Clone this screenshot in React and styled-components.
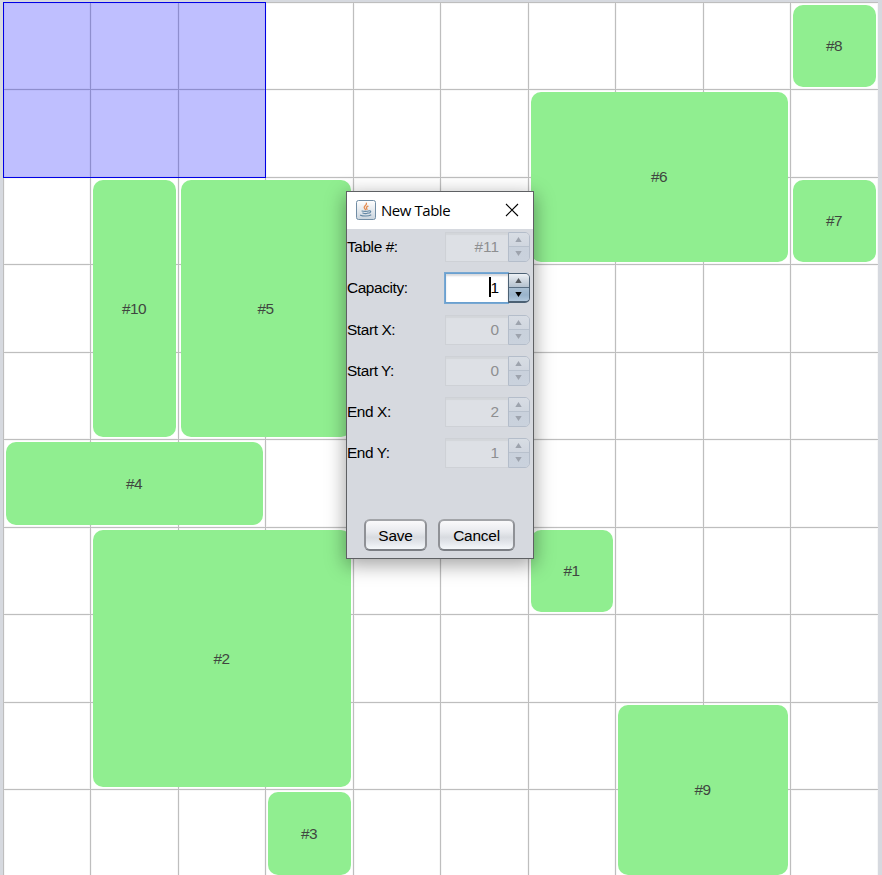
import React from "react";
import styled, { createGlobalStyle, css } from "styled-components";

const GlobalStyle = createGlobalStyle`
  * { box-sizing: border-box; }
  html, body { margin: 0; height: 100%; overflow: hidden; background: #d6d9df; }
  body { font-family: "Liberation Sans", Arial, sans-serif; font-size: 15px; }
`;

const Page = styled.main`
  height: 875px;
  width: 882px;
  padding: 2px 4px 0 3px;
  overflow: hidden;
  position: relative;
`;

const FloorPlan = styled.div`
  display: grid;
  grid-template-columns: repeat(5, 87px 88px);
  grid-template-rows: repeat(5, 87px 88px);
  background: #fff;
`;

const Cell = styled.div`
  grid-area: ${(p) => `${p.$row + 1} / ${p.$col + 1}`};
  border-left: 1px solid #bebebe;
  border-top: 1px solid #bebebe;
  box-shadow: inset 0 0 0 1px #f7f7f7;
`;

const span = css`
  grid-column: ${(p) => `${p.$x0 + 1} / ${p.$x1 + 2}`};
  grid-row: ${(p) => `${p.$y0 + 1} / ${p.$y1 + 2}`};
`;

const Table = styled.div`
  ${span}
  margin: 3px 2px 2px 3px;
  border-radius: 10px;
  background: #90ee90;
  color: #404640;
  display: flex;
  align-items: center;
  justify-content: center;
  padding: 0 1px 0 0;
  font-size: 15.4px;
  letter-spacing: -0.6px;
`;

const Selection = styled.div`
  ${span}
  margin: 0 -1px -1px 0;
  border: 1px solid #0000e6;
  background: rgba(0, 0, 255, 0.25);
  z-index: 1;
`;

const Dialog = styled.section`
  position: absolute;
  left: 346px;
  top: 191px;
  width: 188px;
  height: 368px;
  z-index: 2;
  display: flex;
  flex-direction: column;
  border: 1px solid #5e6063;
  background: #d6d9df;
  box-shadow: 0 5px 18px 1px rgba(0, 0, 0, 0.36);
`;

const TitleBar = styled.header`
  height: 37px;
  flex: none;
  display: flex;
  align-items: center;
  padding: 0 14px 2px 9px;
  background: #fff;
`;

const Title = styled.h1`
  margin: 0 auto 0 5px;
  font: 400 15px/20px "Open Sans", "Noto Sans", sans-serif;
  letter-spacing: -0.45px;
  color: #000;
`;

const Form = styled.div`
  display: grid;
  grid-template-columns: 98px 86px;
  grid-auto-rows: 30px;
  row-gap: 11.25px;
  padding-top: 3px;
  color: #000;
`;

const Label = styled.label`
  align-self: center;
  font-size: 15.4px;
  letter-spacing: -0.4px;
  line-height: 20px;
`;

const Spinner = styled.div`
  display: flex;
  height: 30px;
`;

const Value = styled.div`
  width: 63px;
  height: 30px;
  display: flex;
  align-items: center;
  justify-content: flex-end;
  padding-right: 9px;
  font-size: 15.4px;
  color: #8e8f91;
  background: #dde0e5;
  border: 1px solid #ced1d6;
  border-right: 0;
  box-shadow: inset 0 2px 1px #d3d6da;
  ${(p) =>
    p.$active &&
    css`
      color: #000;
      background: #fff;
      border-color: #6aa0d0;
      box-shadow: 0 0 0 1px #78a8d2, inset 0 2px 2px #d8dadd;
    `}
`;

const Caret = styled.span`
  width: 2px;
  height: 20px;
  margin: -3px -1px 0 0;
  background: #000;
`;

const Arrows = styled.div`
  width: 22px;
  height: 30px;
  display: grid;
  grid-template-rows: 13px 15px;
  border: 1px solid ${(p) => (p.$active ? "#4c6174" : "#b4bdca")};
  border-bottom-width: ${(p) => (p.$active ? "2px" : "1px")};
  border-radius: 0 5px 5px 0;
  overflow: hidden;
  position: relative;
`;

const Arrow = styled.div`
  display: flex;
  align-items: center;
  justify-content: center;
  padding-right: 1px;
  padding-bottom: ${(p) => (p.$down ? "1px" : "0")};
  color: ${(p) => (p.$active ? (p.$down ? "#000" : "#52575c") : "#9da3ad")};
  border-top: ${(p) => (p.$down ? `1px solid ${p.$active ? "#586e82" : "#b8c1cd"}` : "0")};
  background: ${(p) =>
    p.$active
      ? p.$down
        ? "linear-gradient(#a9bfd3, #9ab4cb 50%, #b4cbe0)"
        : "linear-gradient(#eef2f6, #cfd8e1 50%, #b4c2cf)"
      : p.$down
        ? "linear-gradient(#c9d1dc, #cad2dd)"
        : "linear-gradient(#d8dde4, #d0d6df)"};
`;

const Actions = styled.footer`
  display: flex;
  gap: 11px;
  margin: auto 0 7px 17px;
`;

const Button = styled.button`
  width: ${(p) => p.$width}px;
  height: 32px;
  padding: 1px 0 0;
  font: 400 15.4px "Liberation Sans", Arial, sans-serif;
  letter-spacing: -0.2px;
  color: #000;
  border: 2px solid;
  border-color: #a2a4a8 #8f9196 #7b7e84;
  border-radius: 6px;
  background: linear-gradient(#fafafb, #e8eaee 38%, #d8dbe0 58%, #e0e3e8 72%, #f5f8fb);
`;

const JavaIcon = () => (
  <svg width="20" height="20" viewBox="0 0 20 20">
    <defs>
      <linearGradient id="tile" x1="0" y1="0" x2="0" y2="1">
        <stop offset="0" stopColor="#fff" />
        <stop offset="1" stopColor="#cbd5de" />
      </linearGradient>
    </defs>
    <rect x=".5" y=".5" width="19" height="19" rx="2" fill="url(#tile)" stroke="#718da5" />
    <g fill="none" strokeLinecap="round">
      <path d="M10.4 3.2c.8 1.8-2.6 2.6-2.2 4.4.2.8 1 1.2 1.2 2M12 6.2c-2 .9-1.8 1.8-1 3.2" stroke="#e58c50" strokeWidth="1.3" />
      <path d="M6 11c1.4.6 5.2.6 6.6 0M6.8 13c1.5.6 3.9.6 5.1 0M13 10.8c2.6-.4 1.9 2-.2 2.4M4.5 15.2c2.5 1.2 8.3 1 10.3-.2" stroke="#6488a4" strokeWidth="1.2" />
    </g>
  </svg>
);

const CloseIcon = () => (
  <svg width="14" height="14" viewBox="0 0 14 14">
    <path d="M1 1l12 12M13 1L1 13" stroke="#000" strokeWidth="1.1" />
  </svg>
);

const Triangle = ({ down }) => (
  <svg width="7" height="5" viewBox="0 0 7 5">
    <path d={down ? "M.3 0h6.4L3.5 5z" : "M.3 5h6.4L3.5 0z"} fill="currentColor" />
  </svg>
);

const tables = [
  { id: 1, x0: 6, y0: 6, x1: 6, y1: 6 },
  { id: 2, x0: 1, y0: 6, x1: 3, y1: 8 },
  { id: 3, x0: 3, y0: 9, x1: 3, y1: 9 },
  { id: 4, x0: 0, y0: 5, x1: 2, y1: 5 },
  { id: 5, x0: 2, y0: 2, x1: 3, y1: 4 },
  { id: 6, x0: 6, y0: 1, x1: 8, y1: 2 },
  { id: 7, x0: 9, y0: 2, x1: 9, y1: 2 },
  { id: 8, x0: 9, y0: 0, x1: 9, y1: 0 },
  { id: 9, x0: 7, y0: 8, x1: 8, y1: 9 },
  { id: 10, x0: 1, y0: 2, x1: 1, y1: 4 },
];

const fields = [
  { label: "Table #:", value: "#11" },
  { label: "Capacity:", value: "1", active: true },
  { label: "Start X:", value: "0" },
  { label: "Start Y:", value: "0" },
  { label: "End X:", value: "2" },
  { label: "End Y:", value: "1" },
];

const cells = Array.from({ length: 100 }, (_, i) => ({ row: Math.floor(i / 10), col: i % 10 }));

export default function App() {
  return (
    <>
      <GlobalStyle />
      <Page>
        <FloorPlan>
          {cells.map((c) => (
            <Cell key={`${c.row}-${c.col}`} $row={c.row} $col={c.col} />
          ))}
          {tables.map((t) => (
            <Table key={t.id} $x0={t.x0} $y0={t.y0} $x1={t.x1} $y1={t.y1}>
              #{t.id}
            </Table>
          ))}
          <Selection $x0={0} $y0={0} $x1={2} $y1={1} />
        </FloorPlan>
        <Dialog>
          <TitleBar>
            <JavaIcon />
            <Title>New Table</Title>
            <CloseIcon />
          </TitleBar>
          <Form>
            {fields.map((f) => (
              <React.Fragment key={f.label}>
                <Label>{f.label}</Label>
                <Spinner>
                  <Value $active={f.active}>
                    {f.active && <Caret />}
                    {f.value}
                  </Value>
                  <Arrows $active={f.active}>
                    <Arrow $active={f.active}>
                      <Triangle />
                    </Arrow>
                    <Arrow $active={f.active} $down>
                      <Triangle down />
                    </Arrow>
                  </Arrows>
                </Spinner>
              </React.Fragment>
            ))}
          </Form>
          <Actions>
            <Button $width={63}>Save</Button>
            <Button $width={77}>Cancel</Button>
          </Actions>
        </Dialog>
      </Page>
    </>
  );
}
